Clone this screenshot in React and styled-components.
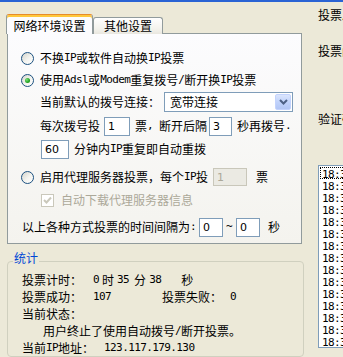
import React from 'react';
import styled, { createGlobalStyle } from 'styled-components';

const GlobalStyle = createGlobalStyle`
	html, body {
		margin: 0;
		padding: 0;
		overflow: hidden;
		background: #ece9d8;
	}
	body {
		font-family: 'Noto Sans CJK SC', 'Noto Sans', sans-serif;
		font-size: 12px;
		color: #000;
	}
	* {
		box-sizing: border-box;
	}
`;

const Window = styled.div`
	width: 343px;
	height: 357px;
	overflow: hidden;
	background: #ece9d8;
	border-top: 2px solid #2a63d4;
	display: flex;
`;

const LeftColumn = styled.div`
	width: 318px;
	flex: none;
	padding: 12px 0 0 7px;
	display: flex;
	flex-direction: column;
`;

const TabStrip = styled.div`
	display: flex;
	align-items: flex-end;
	height: 20px;
	margin-left: -1px;
`;

const Tab = styled.div`
	position: relative;
	z-index: ${(p) => (p.$active ? 1 : 0)};
	height: ${(p) => (p.$active ? '20px' : '17px')};
	width: ${(p) => p.$w}px;
	display: flex;
	align-items: center;
	justify-content: center;
	line-height: 12px;
	padding-top: ${(p) => (p.$active ? '2px' : '0')};
	border: 1px solid #919b9c;
	border-bottom: none;
	border-radius: 3px 3px 0 0;
	background: ${(p) =>
		p.$active ? '#fcfcfe' : 'linear-gradient(#ffffff, #f3f2ec 70%, #e9e7df)'};
	${(p) =>
		p.$active &&
		`
		border-top: 1px solid #e68b2c;
		box-shadow: inset 0 2px 0 #ffc83c;
	`}
`;

const Panel = styled.div`
	width: 295px;
	height: 218px;
	margin-top: -1px;
	border: 1px solid #919b9c;
	background: linear-gradient(#fcfcfe, #f4f3ee);
	padding: 14px 0 0 13px;
	display: flex;
	flex-direction: column;
`;

const Row = styled.div`
	display: flex;
	align-items: center;
	height: 20px;
	margin-top: ${(p) => p.$mt || 0}px;
	padding-left: ${(p) => p.$indent || 0}px;
	white-space: pre;
	line-height: 12px;
	color: ${(p) => (p.$disabled ? '#aca899' : '#000')};
`;

const Half = styled.span`
	font-family: 'DejaVu Sans Mono', monospace;
	font-size: 11px;
	letter-spacing: -0.6px;
`;

const RadioCircle = styled.span`
	width: 13px;
	height: 13px;
	flex: none;
	margin-right: 6px;
	border-radius: 50%;
	border: 1px solid #1c5180;
	background: linear-gradient(135deg, #d4d4cc 0%, #f4f4f0 55%, #ffffff 100%);
	display: inline-flex;
	align-items: center;
	justify-content: center;

	&::after {
		content: '';
		display: ${(p) => (p.$checked ? 'block' : 'none')};
		width: 5px;
		height: 5px;
		border-radius: 50%;
		background: radial-gradient(circle at 35% 35%, #7be27a, #21a121 60%, #1a8a1a);
	}
`;

const CheckBox = styled.span`
	width: 13px;
	height: 13px;
	flex: none;
	margin: 0 7px 0 1px;
	border: 1px solid #cac8bb;
	background: #ffffff;
	display: inline-flex;
	align-items: center;
	justify-content: center;

	svg {
		display: block;
	}
`;

const Field = styled.input`
	width: ${(p) => p.$w}px;
	height: ${(p) => p.$h || 19}px;
	margin: 0 ${(p) => p.$mr || 0}px 0 ${(p) => p.$ml || 0}px;
	padding: 0 3px;
	border: 1px solid ${(p) => (p.disabled ? '#c9c7ba' : '#7f9db9')};
	background: ${(p) => (p.disabled ? '#ebeae3' : '#ffffff')};
	color: ${(p) => (p.disabled ? '#aca899' : '#000')};
	font-family: 'DejaVu Sans', sans-serif;
	font-size: 11px;
	outline: none;
	flex: none;
`;

const Select = styled.div`
	width: 129px;
	height: 20px;
	margin-left: 4px;
	padding: 1px;
	border: 1px solid #7f9db9;
	background: #ffffff;
	display: flex;
	align-items: stretch;
`;

const SelectText = styled.span`
	flex: 1;
	display: flex;
	align-items: center;
	padding-left: 4px;
`;

const DropButton = styled.span`
	width: 16px;
	border: 1px solid #c3d3fd;
	border-radius: 2px;
	background: linear-gradient(#dbe5fd, #c1d3fb 50%, #b2c6f5);
	display: flex;
	align-items: center;
	justify-content: center;
`;

const StatsBox = styled.fieldset`
	width: 297px;
	margin: 8px 0 0 0;
	padding: 1px 0 0 14px;
	border: 1px solid #d0d0bf;
	border-radius: 4px;
	min-width: 0;
`;

const Legend = styled.legend`
	margin-left: -9px;
	padding: 0 1px 6px 1px;
	line-height: 12px;
	color: #0046d5;
`;

const StatLine = styled.div`
	display: flex;
	align-items: center;
	height: 17px;
	line-height: 12px;
	white-space: pre;
	padding-left: ${(p) => p.$indent || 0}px;
`;

const Value = styled.span`
	display: inline-flex;
	align-items: center;
	margin-left: ${(p) => p.$ml || 0}px;
	width: ${(p) => (p.$w ? `${p.$w}px` : 'auto')};
`;

const Unit = styled.span`
	margin: 0 ${(p) => p.$mr || 3}px 0 ${(p) => p.$ml || 3}px;
`;

const RightColumn = styled.div`
	flex: 1;
	min-width: 0;
	overflow: hidden;
	padding-top: 7px;
	display: flex;
	flex-direction: column;
	white-space: nowrap;
	line-height: 12px;
`;

const SideLabel = styled.div`
	height: 12px;
	margin-top: ${(p) => p.$mt || 0}px;
`;

const LogList = styled.div`
	width: 120px;
	height: 183px;
	margin-top: 40px;
	border: 1px solid #7f9db9;
	background: #ffffff;
	padding: 1px 0 0 1px;
	overflow: hidden;
`;

const LogItem = styled.div`
	height: 12px;
	line-height: 10px;
	padding-left: 1px;
	border: 1px dotted ${(p) => (p.$focus ? '#000' : 'transparent')};
`;

const Chevron = () => (
	<svg width='9' height='6' viewBox='0 0 9 6'>
		<path d='M1 1 L4.5 4.5 L8 1' fill='none' stroke='#4d6185' strokeWidth='2' />
	</svg>
);

const Tick = () => (
	<svg width='9' height='9' viewBox='0 0 9 9'>
		<path d='M1 4 L3.5 6.5 L8 1.5' fill='none' stroke='#cac8bb' strokeWidth='2' />
	</svg>
);

const logs = [
	'18:35:38 停止投票',
	'18:35:36 拨号断开',
	'18:35:31 投票成功',
	'18:35:27 投票成功',
	'18:35:22 拨号成功',
	'18:35:19 正在拨号',
	'18:35:16 拨号断开',
	'18:35:12 投票成功',
	'18:35:08 投票成功',
	'18:35:03 拨号成功',
	'18:34:59 正在拨号',
	'18:34:56 拨号断开',
	'18:34:51 投票成功',
	'18:34:47 投票成功',
	'18:34:42 拨号成功',
];

const App = () => {
	return (
		<>
			<GlobalStyle />
			<Window>
				<LeftColumn>
					<TabStrip>
						<Tab $active $w={87}>网络环境设置</Tab>
						<Tab $w={70}>其他设置</Tab>
					</TabStrip>

					<Panel>
						<Row>
							<RadioCircle />
							不换<Half>IP</Half>或软件自动换<Half>IP</Half>投票
						</Row>
						<Row $mt={2}>
							<RadioCircle $checked />
							使用<Half>Adsl</Half>或<Half>Modem</Half>重复拨号<Half>/</Half>断开换<Half>IP</Half>投票
						</Row>
						<Row $mt={2} $indent={19}>
							当前默认的拨号连接：
							<Select>
								<SelectText>宽带连接</SelectText>
								<DropButton>
									<Chevron />
								</DropButton>
							</Select>
						</Row>
						<Row $mt={4} $indent={19}>
							每次拨号投
							<Field $w={26} $ml={4} $mr={5} defaultValue='1' />
							票<Half>, </Half>断开后隔
							<Field $w={23} $ml={2} $mr={5} defaultValue='3' />
							秒再拨号<Half>.</Half>
						</Row>
						<Row $mt={3} $indent={20}>
							<Field $w={28} $mr={5} defaultValue='60' />
							分钟内<Half>IP</Half>重复即自动重拨
						</Row>
						<Row $mt={8}>
							<RadioCircle />
							启用代理服务器投票，每个<Half>IP</Half>投
							<Field $w={34} $h={18} $ml={5} $mr={9} defaultValue='1' disabled />
							票
						</Row>
						<Row $mt={3} $indent={19} $disabled>
							<CheckBox>
								<Tick />
							</CheckBox>
							自动下载代理服务器信息
						</Row>
						<Row $mt={7} $indent={1}>
							以上各种方式投票的时间间隔为<Half>:</Half>
							<Field $w={24} $ml={3} $mr={3} defaultValue='0' />
							<Half>~</Half>
							<Field $w={24} $ml={4} $mr={8} defaultValue='0' />
							秒
						</Row>
					</Panel>

					<StatsBox>
						<Legend>统计</Legend>
						<StatLine>
							投票计时：
							<Value $ml={11}>
								<Half>0</Half>
								<Unit>时</Unit>
								<Half>35</Half>
								<Unit $ml={5}>分</Unit>
								<Half>38</Half>
								<Unit $ml={20}>秒</Unit>
							</Value>
						</StatLine>
						<StatLine>
							投票成功：
							<Value $ml={11} $w={69}>
								<Half>107</Half>
							</Value>
							投票失败：
							<Value $ml={8}>
								<Half>0</Half>
							</Value>
						</StatLine>
						<StatLine>当前状态：</StatLine>
						<StatLine $indent={21}>
							用户终止了使用自动拨号<Half>/</Half>断开投票。
						</StatLine>
						<StatLine>
							当前<Half>IP</Half>地址：
							<Value $ml={10}>
								<Half>123.117.179.130</Half>
							</Value>
						</StatLine>
					</StatsBox>
				</LeftColumn>

				<RightColumn>
					<SideLabel>投票总数：</SideLabel>
					<SideLabel $mt={24}>投票间隔：</SideLabel>
					<SideLabel $mt={56}>验证码：</SideLabel>
					<LogList>
						{logs.map((line, i) => (
							<LogItem key={i} $focus={i === 0}>
								<Half>{line}</Half>
							</LogItem>
						))}
					</LogList>
				</RightColumn>
			</Window>
		</>
	);
};

export default App;
